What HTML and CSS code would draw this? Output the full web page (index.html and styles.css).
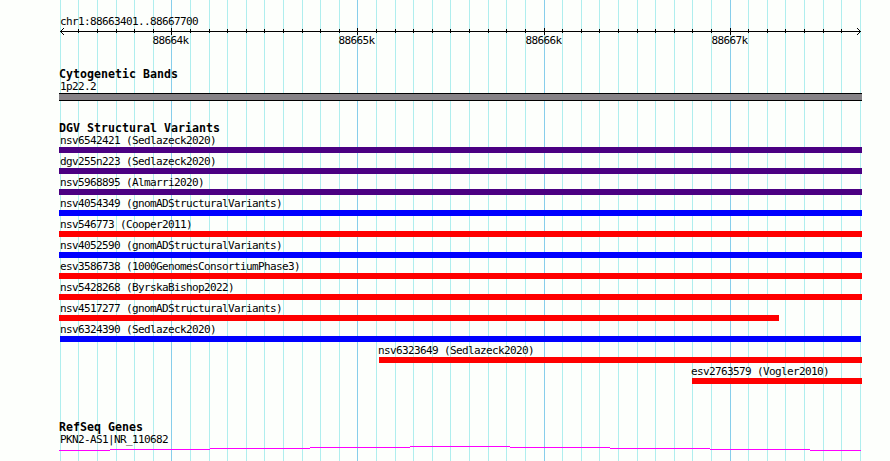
FILE: index.html
```html
<!DOCTYPE html>
<html lang="en">

<head>
    <meta charset="UTF-8">
    <meta name="viewport" content="width=device-width, initial-scale=1.0">
    <title>chr1:88663401..88667700</title>
    <link rel="stylesheet" href="styles.css">
</head>

<body>

    <div class="browser">
        <svg class="grid" width="890" height="461" shape-rendering="crispEdges">
            <g id="grid-lines"></g>
        </svg>

        <div class="ruler">
            <div class="label">chr1:88663401..88667700</div>
            <svg class="axis" width="803" height="20" viewBox="59 28 803 20">
                <g id="ticks" shape-rendering="crispEdges">
                    <rect x="60" y="31" width="801" height="1" />
                </g>
                <path d="M63 28h1v1h-1zM62 29h1v1h-1zM61 30h1v1h-1zM61 32h1v1h-1zM62 33h1v1h-1zM63 34h1v1h-1z" shape-rendering="crispEdges" />
                <path d="M857 28h1v1h-1zM858 29h1v1h-1zM859 30h1v1h-1zM859 32h1v1h-1zM858 33h1v1h-1zM857 34h1v1h-1z" shape-rendering="crispEdges" />
                <text x="152.5" y="44">88664k</text>
                <text x="338.5" y="44">88665k</text>
                <text x="525.5" y="44">88666k</text>
                <text x="711.5" y="44">88667k</text>
            </svg>
        </div>

        <div class="track cytoband">
            <h2>Cytogenetic Bands</h2>
            <div class="label">1p22.2</div>
            <div class="band"></div>
        </div>

        <div class="track variants">
            <h2>DGV Structural Variants</h2>
            <div class="feature">
                <div class="label">nsv6542421 (Sedlazeck2020)</div>
                <div class="bar complex"></div>
            </div>
            <div class="feature">
                <div class="label">dgv255n223 (Sedlazeck2020)</div>
                <div class="bar complex"></div>
            </div>
            <div class="feature">
                <div class="label">nsv5968895 (Almarri2020)</div>
                <div class="bar complex"></div>
            </div>
            <div class="feature">
                <div class="label">nsv4054349 (gnomADStructuralVariants)</div>
                <div class="bar gain"></div>
            </div>
            <div class="feature">
                <div class="label">nsv546773 (Cooper2011)</div>
                <div class="bar loss"></div>
            </div>
            <div class="feature">
                <div class="label">nsv4052590 (gnomADStructuralVariants)</div>
                <div class="bar gain"></div>
            </div>
            <div class="feature">
                <div class="label">esv3586738 (1000GenomesConsortiumPhase3)</div>
                <div class="bar loss"></div>
            </div>
            <div class="feature">
                <div class="label">nsv5428268 (ByrskaBishop2022)</div>
                <div class="bar loss"></div>
            </div>
            <div class="feature" style="margin-right: 83px">
                <div class="label">nsv4517277 (gnomADStructuralVariants)</div>
                <div class="bar loss"></div>
            </div>
            <div class="feature">
                <div class="label">nsv6324390 (Sedlazeck2020)</div>
                <div class="bar gain inset"></div>
            </div>
            <div class="feature" style="margin-left: 320px">
                <div class="label flush">nsv6323649 (Sedlazeck2020)</div>
                <div class="bar loss"></div>
            </div>
            <div class="feature" style="margin-left: 633px">
                <div class="label flush">esv2763579 (Vogler2010)</div>
                <div class="bar loss"></div>
            </div>
        </div>

        <div class="track genes">
            <h2>RefSeq Genes</h2>
            <div class="label">PKN2-AS1|NR_110682</div>
            <svg class="gene" width="803" height="5" viewBox="59 446 803 5">
                <path d="M59 450.5H110M110 449.5H210M210 448.5H310M310 447.5H410M410 446.5H510M510 447.5H610M610 448.5H710M710 449.5H810M810 450.5H861" />
            </svg>
        </div>
    </div>

    <script>
        const gridLines = document.querySelector('#grid-lines')
        const ticks = document.querySelector('#ticks')
        // one line per 100 bp, a major one per 1000 bp
        const step = 800 / 43

        function addLine(parent, x, y, height, name) {
            const line = document.createElementNS('http://www.w3.org/2000/svg', 'rect')
            line.setAttribute('x', x)
            line.setAttribute('y', y)
            line.setAttribute('width', 1)
            line.setAttribute('height', height)
            line.setAttribute('class', name)
            parent.appendChild(line)
        }

        for (let i = 0; i <= 43; i++) {
            const x = Math.round(59.8 + i * step)
            const major = i % 10 == 6
            addLine(gridLines, x, 0, 461, major ? 'major' : 'minor')
            if (i > 0 && i < 43) {
                addLine(ticks, x, major ? 28 : 29, major ? 7 : 4, 'tick')
            }
        }
    </script>
</body>

</html>
```
FILE: styles.css
```css
* {
    margin: 0;
    padding: 0;
    box-sizing: border-box;
}

body {
    background: #fdfffc;
    color: #000;
    font-family: "DejaVu Sans Mono", monospace;
    font-size: 11px;
    line-height: 13px;
    letter-spacing: -.622px;
}

.browser {
    position: relative;
    width: 890px;
    height: 461px;
    padding: 15px 28px 0 59px;
    overflow: hidden;
}

/* GRID */
.grid {
    position: absolute;
    top: 0;
    left: 0;
    z-index: -1;
}

.minor {
    fill: #afeeee;
}

.major {
    fill: #87ceeb;
}

/* RULER */
.ruler {
    height: 52px;
}

.axis {
    display: block;
}

/* TRACKS */
h2 {
    font-size: 11.6px;
    line-height: 13px;
    height: 13px;
    padding-top: 1px;
    letter-spacing: .017px;
    white-space: nowrap;
}

.label {
    height: 13px;
    padding-left: 1px;
    white-space: nowrap;
}

.label.flush {
    padding-left: 0;
    margin-left: -1px;
}

.band {
    height: 8px;
    background: #868286;
    border-top: 1px solid #000;
    border-bottom: 1px solid #000;
}

.variants {
    margin-top: 20px;
}

.feature {
    height: 21px;
}

.bar {
    height: 6px;
}

.bar.inset {
    margin: 0 1px;
}

.complex {
    background: #4b0082;
}

.gain {
    background: #00f;
}

.loss {
    background: #f00;
}

.genes {
    margin-top: 34px;
}

.gene {
    display: block;
    fill: none;
    stroke: #f0f;
}
```
